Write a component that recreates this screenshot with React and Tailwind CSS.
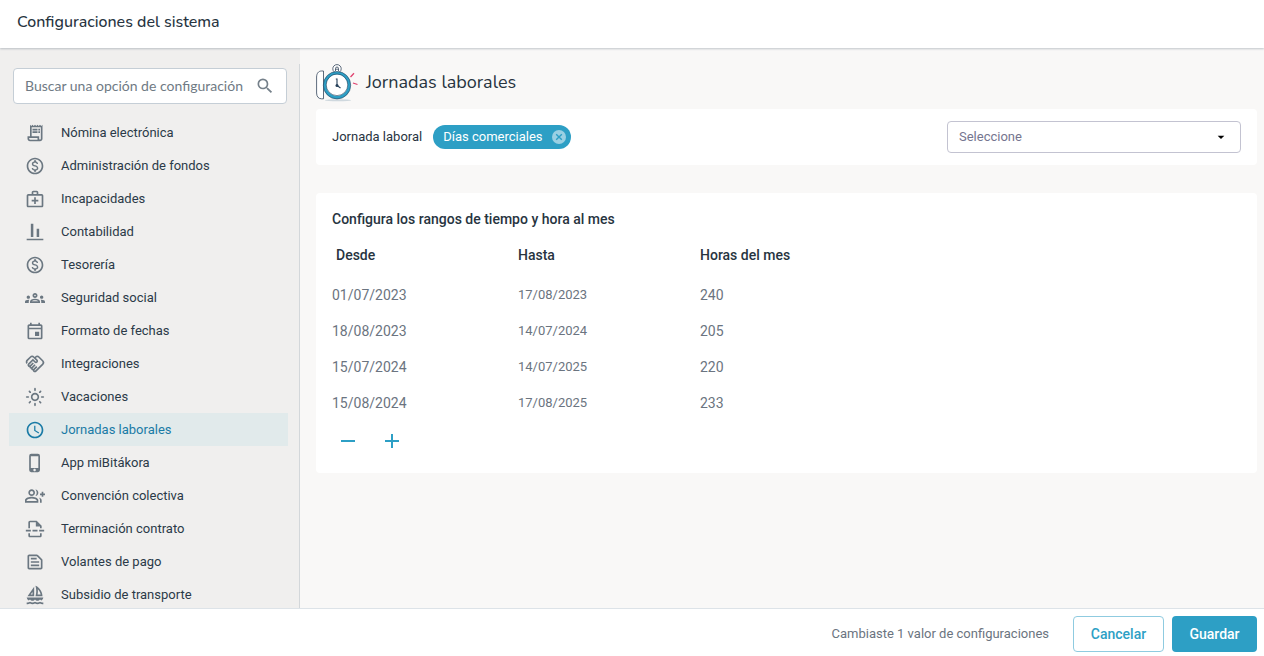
import React, { useState } from 'react';
import {
    MdOutlineReceiptLong,
    MdOutlineMonetizationOn,
    MdOutlineMedicalServices,
    MdOutlineAlignVerticalBottom,
    MdOutlineGroups,
    MdOutlineEvent,
    MdOutlineHandshake,
    MdOutlineLightMode,
    MdSchedule,
    MdOutlinePhoneIphone,
    MdOutlineGroupAdd,
    MdOutlineInsertPageBreak,
    MdOutlineTextSnippet,
    MdOutlineSailing,
    MdSearch,
    MdArrowDropDown,
} from 'react-icons/md';

const menuItems = [
    { label: 'Nómina electrónica', icon: MdOutlineReceiptLong },
    { label: 'Administración de fondos', icon: MdOutlineMonetizationOn },
    { label: 'Incapacidades', icon: MdOutlineMedicalServices },
    { label: 'Contabilidad', icon: MdOutlineAlignVerticalBottom },
    { label: 'Tesorería', icon: MdOutlineMonetizationOn },
    { label: 'Seguridad social', icon: MdOutlineGroups },
    { label: 'Formato de fechas', icon: MdOutlineEvent },
    { label: 'Integraciones', icon: MdOutlineHandshake },
    { label: 'Vacaciones', icon: MdOutlineLightMode },
    { label: 'Jornadas laborales', icon: MdSchedule },
    { label: 'App miBitákora', icon: MdOutlinePhoneIphone },
    { label: 'Convención colectiva', icon: MdOutlineGroupAdd },
    { label: 'Terminación contrato', icon: MdOutlineInsertPageBreak },
    { label: 'Volantes de pago', icon: MdOutlineTextSnippet },
    { label: 'Subsidio de transporte', icon: MdOutlineSailing },
];

const initialRanges = [
    { from: '01/07/2023', to: '17/08/2023', hours: 240 },
    { from: '18/08/2023', to: '14/07/2024', hours: 205 },
    { from: '15/07/2024', to: '14/07/2025', hours: 220 },
    { from: '15/08/2024', to: '17/08/2025', hours: 233 },
];

const StopwatchIcon = () => (
    <svg className="w-[42px] h-[38px] shrink-0" viewBox="0 0 42 38" fill="none" aria-hidden="true">
        <ellipse cx="22" cy="36.3" rx="13" ry="1" fill="#cfd8de" />
        <path d="M7.5 7H5.5C2.5 7 .6 9.500 .6 13V29C.6 32.500 2.500 34.800 5.500 34.800H7.500Z" fill="#fff" stroke="#33455a" strokeWidth="0.8" />
        <circle cx="21" cy="4.8" r="4.2" fill="#fff" stroke="#33455a" strokeWidth="0.8" />
        <path d="M19.5 7V4.500a1.500 1.500 0 0 1 3 0V7M19.500 5.200h3" stroke="#33455a" strokeWidth="0.8" />
        <circle cx="21" cy="21.2" r="12.2" fill="#fff" stroke="#2d9fc5" strokeWidth="3" />
        <circle cx="21" cy="21.2" r="13.7" stroke="#27405a" strokeWidth="0.6" />
        <circle cx="21" cy="20.8" r="10.8" stroke="#27405a" strokeWidth="0.6" />
        <path d="M21 14.500V21.500L24.500 24M19.800 15h1.200" stroke="#27405a" strokeWidth="1.1" />
        <circle cx="21" cy="21.5" r="1.5" fill="#27405a" />
        <path d="M34.500 13L38 9.200M37 19L41.500 20.500" stroke="#e0426f" strokeWidth="1.3" />
    </svg>
);

const Sidebar = ({ active, onSelect }) => (
    <aside className="w-[300px] shrink-0 min-h-0 flex flex-col bg-[#f0efee] pt-4">
        <div className="flex-1 min-h-0 flex flex-col border-r border-[#d3d7da]">
            <div className="pl-[13px] pr-3 pt-1 pb-3">
                <label className="flex items-center h-9 bg-white border border-[#c5ced6] rounded px-[11px] gap-2">
                    <input
                        type="text"
                        aria-label="Buscar una opción de configuración"
                        placeholder="Buscar una opción de configuración"
                        className="flex-1 min-w-0 bg-transparent outline-none font-['Lato',sans-serif] text-sm text-[#5f6b76] placeholder:text-[#6f7a84]"
                    />
                    <MdSearch className="w-5 h-5 shrink-0 text-[#75808a]" />
                </label>
            </div>
            <nav className="flex-1 min-h-0 overflow-y-auto pl-[9px] pr-[11px] [scrollbar-width:none]">
                <ul>
                    {menuItems.map(({ label, icon: Icon }) => (
                        <li key={label}>
                            <a
                                href="#"
                                onClick={() => onSelect(label)}
                                className={`flex items-center gap-4 h-[33px] pl-4 text-[13px] ${
                                    active === label ? 'bg-[#e1eaeb] text-[#1a7ba6]' : 'text-[#2b3a48]'
                                }`}
                            >
                                <Icon
                                    className={`w-5 h-5 shrink-0 ${
                                        active === label ? 'text-[#1a7ba6]' : 'text-[#6b7781]'
                                    }`}
                                />
                                {label}
                            </a>
                        </li>
                    ))}
                </ul>
            </nav>
        </div>
    </aside>
);

const RangesTable = ({ ranges }) => (
    <table className="table-fixed w-full text-left text-sm text-[#6b7480]">
        <colgroup>
            <col className="w-[186px]" />
            <col className="w-[182px]" />
            <col />
        </colgroup>
        <thead>
            <tr className="h-10 align-top text-[#27343f]">
                <th className="font-medium pt-2 pl-1">Desde</th>
                <th className="font-medium pt-2">Hasta</th>
                <th className="font-medium pt-2">Horas del mes</th>
            </tr>
        </thead>
        <tbody>
            {ranges.map((range) => (
                <tr key={range.from} className="h-9">
                    <td>{range.from}</td>
                    <td className="text-[13px]">{range.to}</td>
                    <td>{range.hours}</td>
                </tr>
            ))}
        </tbody>
    </table>
);

const App = () => {
    const [active, setActive] = useState('Jornadas laborales');
    const [ranges, setRanges] = useState(initialRanges);
    const [showChip, setShowChip] = useState(true);

    return (
        <div className="h-screen flex flex-col bg-white font-['Roboto',sans-serif] text-[#27343f]">
            <header className="h-12 shrink-0 flex items-center px-[17px] pb-1 shadow-[0_1px_2px_rgba(60,80,100,0.3)] z-10">
                <h1 className="font-['Nunito','Noto_Sans',sans-serif] font-medium text-base">
                    Configuraciones del sistema
                </h1>
            </header>

            <div className="flex-1 min-h-0 flex">
                <Sidebar active={active} onSelect={setActive} />

                <main className="flex-1 min-w-0 overflow-y-auto bg-[#f9f8f7] pl-4 pr-[7px] pt-4">
                    <div className="flex items-center gap-2 h-[38px] mb-[7px]">
                        <StopwatchIcon />
                        <h2 className="font-['Nunito','Noto_Sans',sans-serif] text-lg pb-[2px]">Jornadas laborales</h2>
                    </div>

                    <section className="flex items-center h-14 bg-white rounded px-4 mb-7">
                        <label htmlFor="jornada" className="text-[13px] mr-[11px]">Jornada laboral</label>
                        {showChip && (
                            <span className="flex items-center gap-2 h-6 rounded-full bg-[#2d9fc5] text-white text-[13px] pl-[10px] pr-1">
                                Días comerciales
                                <button type="button" aria-label="Quitar" onClick={() => setShowChip(false)}>
                                    <svg className="w-4 h-4" viewBox="0 0 16 16" fill="none">
                                        <circle cx="8" cy="8" r="7" fill="#9ad0e3" />
                                        <path d="M5.200 5.200l5.600 5.600M10.800 5.200l-5.600 5.600" stroke="#2d9fc5" strokeWidth="1.4" />
                                    </svg>
                                </button>
                            </span>
                        )}
                        <div className="relative ml-auto w-[294px]">
                            <select
                                id="jornada"
                                className="appearance-none w-full h-8 bg-white border border-[#c3c3d1] rounded pl-[11px] text-[13px] text-[#75758f]"
                            >
                                <option>Seleccione</option>
                                <option>Días comerciales</option>
                            </select>
                            <MdArrowDropDown className="absolute right-3 top-2 w-4 h-4 text-black pointer-events-none" />
                        </div>
                    </section>

                    <section className="bg-white rounded px-4 pt-4 pb-4">
                        <h3 className="text-sm font-medium mb-2">Configura los rangos de tiempo y hora al mes</h3>
                        <RangesTable ranges={ranges} />
                        <div className="flex gap-3 pt-1">
                            <button
                                type="button"
                                aria-label="Eliminar rango"
                                className="w-8 h-8 flex items-center justify-center text-[#2d9fc5]"
                                onClick={() => setRanges(ranges.slice(0, -1))}
                            >
                                <svg className="w-[14px] h-[14px]" viewBox="0 0 14 14" fill="currentColor">
                                    <path d="M0 6h14v2H0z" />
                                </svg>
                            </button>
                            <button
                                type="button"
                                aria-label="Agregar rango"
                                className="w-8 h-8 flex items-center justify-center text-[#2d9fc5]"
                                onClick={() => setRanges(initialRanges)}
                            >
                                <svg className="w-[14px] h-[14px]" viewBox="0 0 14 14" fill="currentColor">
                                    <path d="M6 0h2v6h6v2H8v6H6V8H0V6h6z" />
                                </svg>
                            </button>
                        </div>
                    </section>
                </main>
            </div>

            <footer className="h-12 shrink-0 flex items-center justify-end gap-2 pr-[7px] pt-[2px] border-t border-[#dde3e8]">
                <p className="text-[13px] text-[#6b7480] mr-4">Cambiaste 1 valor de configuraciones</p>
                <button
                    type="button"
                    className="w-[91px] h-9 border border-[#8fcbe0] rounded text-sm font-medium text-[#2d9fc5]"
                >
                    Cancelar
                </button>
                <button type="button" className="w-[85px] h-9 rounded bg-[#2d9fc5] text-sm font-medium text-white">
                    Guardar
                </button>
            </footer>
        </div>
    );
};

export default App;
